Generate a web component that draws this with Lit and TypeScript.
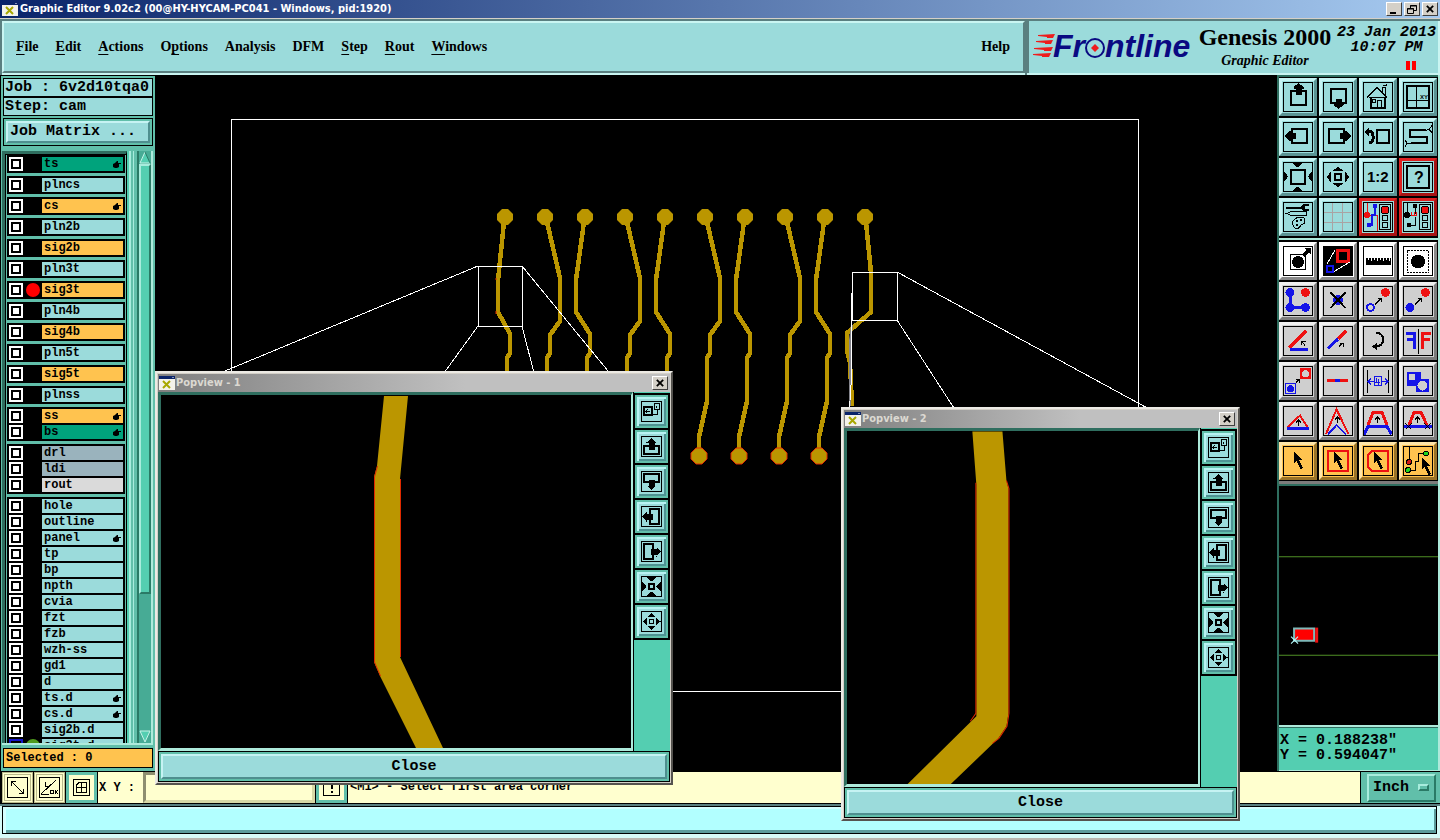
import { LitElement, html, css, svg, nothing } from "lit";
import { customElement, property } from "lit/decorators.js";
import { classMap } from "lit/directives/class-map.js";

const RED = "#ee1111";
const BLUE = "#1414e8";
const GREY = "#cfcfcf";
const COPPER = "#bb9600";

const fill = (d: string, color = "#000") => svg`<path d=${d} fill=${color} />`;
const line = (d: string, width = 1, color = "#000") =>
  svg`<path d=${d} fill="none" stroke=${color} stroke-width=${width} />`;
const dot = (x: number, y: number, r: number, color = "#000") =>
  svg`<circle cx=${x} cy=${y} r=${r} fill=${color} />`;
const ring = (x: number, y: number, r: number, width = 1, color = "#000") =>
  svg`<circle cx=${x} cy=${y} r=${r} fill="none" stroke=${color} stroke-width=${width} />`;

type Tool = { label: string; art: unknown; tone?: string };

const cursor = (x: number, y: number) =>
  fill(`M${x} ${y} l8.5 8 h-3.5 l4 8 -2.5 1 -4 -8 -2.5 2.5 z`);

const trafficLight = svg`
  ${line("M16.5 2.5 h11 v25 h-11 z")}
  ${dot(22, 8, 4, RED)}${ring(22, 8, 4)}${ring(22, 16, 3)}${ring(22, 23, 3)}`;

const viewTools: Tool[] = [
  { label: "Pan up", art: svg`${line("M8 9 h15 v14 h-15 z", 2)}${fill("M15.500 1 l5 4 v2 h-2 v6 h-6 v-6 h-2 v-2 z")}` },
  { label: "Pan down", art: svg`${line("M8 7 h15 v14 h-15 z", 2)}${fill("M12.500 17 h6 v4 h2 v2 l-5 4 -5 -4 v-2 h2 z")}` },
  {
    label: "Home view",
    art: svg`${line("M4 15.5 L14 5.5 L24 15.5")}${line("M19.5 10 v-5 h3 v8 M20 3.5 h3.5 v-2")}
      ${line("M8 15 v11 h14 v-11", 2)}${line("M14.5 26 v-8 h4 v8 M9.5 17.5 h3 v3 h-3 z M6 15.5 h17")}`,
  },
  {
    label: "Split view by coordinates",
    art: svg`${line("M4 4 h22 v22 h-22 z", 2)}${line("M13.5 4 v22 M4 18.5 h22")}
      <text x="17" y="17" font-size="6" font-family="Liberation Sans" font-weight="bold">XY</text>`,
  },
  { label: "Pan left", art: svg`${line("M9 7 h15 v14 h-15 z", 2)}${fill("M2 14 l4 -5 h2 v2 h5 v6 h-5 v2 h-2 z")}` },
  { label: "Pan right", art: svg`${line("M6 7 h15 v14 h-15 z", 2)}${fill("M28 14 l-4 -5 h-2 v2 h-5 v6 h5 v2 h2 z")}` },
  {
    label: "Previous view",
    art: svg`${line("M14 8 h12 v13 h-12 z", 2)}${line("M6 9.5 h2 q2 1 2 4 v3 q0 4 -4 4", 3)}${fill("M1 10 l5 -5 v9 z")}`,
  },
  {
    label: "Serpentine view",
    art: svg`${line("M23 8 H7 v7 h17 v6 H8", 2)}${line("M22 8.5 l4 -1 3 -4 M26 7.5 l3 3 M8 21 l-4 0 -2 -3 M4 21 l-2 4")}`,
  },
  {
    label: "Zoom in",
    art: svg`${line("M8 8 h14 v14 h-14 z", 2)}
      ${fill("M9 1 h11 l-5.500 4.500 z M9 29 h11 l-5.500 -4.500 z M1 9 v11 l4 -5.500 z M29 9 v11 l-4 -5.500 z")}`,
  },
  {
    label: "Zoom out",
    art: svg`${line("M12 12 h6 v6 h-6 z", 2)}
      ${fill("M9.500 9 h11 l-5.500 -4.500 z M9.500 21 h11 l-5.500 4.500 z M8 9.500 v11 l-4.500 -5.500 z M22 9.500 v11 l4.500 -5.500 z")}`,
  },
  { label: "Zoom one to two", art: svg`<text x="4" y="20" font-size="15" font-family="Liberation Sans" font-weight="bold">1:2</text>` },
  {
    label: "Query",
    tone: "alert",
    art: svg`${line("M4 4 h22 v22 h-22 z", 2)}<text x="11" y="21" font-size="16" font-family="Liberation Sans" font-weight="bold">?</text>`,
  },
  {
    label: "Display settings",
    art: svg`${line("M3 6 h16", 2)}${fill("M17 5 l3 -3 h6 v2 h-4 v3 h4 v2 h-6 z")}
      ${line("M3.500 11.500 l5 -2 h15 v4 h-15 z")}${line("M10 19 q3 -4 8 -4 q4 0 4 4 q0 3 -4 4 q-1 3 -4 3.500 q-5 0 -4 -7.500 z")}
      ${line("M13 19 h2 M17 18 h2 M13 23 h2", 2)}`,
  },
  { label: "Grid", art: line("M9.500 1 v28 M19.500 1 v28 M1 10.500 h28 M1 20.500 h28", 1, "#a9a3a3") },
  {
    label: "Netlist check",
    tone: "alert",
    art: svg`${line("M4.500 1 v12 h9.500 v16", 1, RED)}${dot(4, 13, 3, RED)}${line("M12 4 v9 h-3 v10 h-3", 2, BLUE)}${dot(12, 4, 2.5, BLUE)}${dot(6, 23, 2.5, BLUE)}${trafficLight}`,
  },
  {
    label: "Rule check",
    tone: "alert",
    art: svg`${line("M4.500 1 v12 M12.500 4 v8 M4 13.500 h5 M12.500 15 v8 h-6")}${dot(4, 13, 3)}${dot(12, 4, 2.5)}${dot(6, 23, 2.5)}${line("M8 13.500 h6 M8.500 10 v3 M11 10 v3 M13.500 10 v3", 1, RED)}${trafficLight}`,
  },
];

const arrowNE = line("M12 18.500 L18 12.500 M14.500 12.500 h3.500 v3.500");
const stepUp = (x: number, y: number) => line(`M${x} ${y + 5} v-6 M${x - 2.5} ${y + 1.5} l2.500 -2.500 l2.500 2.500`);

const editTools: Tool[] = [
  { label: "Move feature", tone: "white", art: svg`${line("M7.500 8.500 h15 v15 h-15 z")}${dot(15, 16, 6)}${line("M20 10 L26 4", 3)}${fill("M21 2 h7 v7 z")}` },
  {
    label: "Area zoom",
    tone: "white",
    art: svg`${fill("M0 0 h30 v30 h-30 z")}${line("M14.500 4.500 h11 v11 h-11 z", 3, RED)}${line("M4 20 h6 v6 h-6 z", 2, BLUE)}${line("M4 18 L12 4 M11 25.500 L27 16", 1, "#fff")}`,
  },
  { label: "Measure", tone: "white", art: svg`${fill("M3 12 h25 v7 h-25 z")}${line("M5.500 11 v3 M8.500 11 v4 M11.500 11 v3 M14.500 11 v4 M17.500 11 v3 M20.500 11 v4 M23.500 11 v3 M26.500 11 v4", 1, "#fff")}` },
  {
    label: "Select feature",
    tone: "white",
    art: svg`<rect x="4.500" y="4.500" width="21" height="22" fill="none" stroke="#000" stroke-dasharray="2 1" />${dot(15, 15.5, 7)}`,
  },
  { label: "Chain nodes", tone: "grey", art: svg`${line("M7.500 6 v15.500 h15", 3, BLUE)}${dot(7, 6.5, 4.5, BLUE)}${dot(7, 21.5, 4.5, BLUE)}${dot(22.5, 21.5, 4.5, BLUE)}${dot(22.5, 6.5, 4.5, RED)}` },
  { label: "Delete", tone: "grey", art: svg`${dot(15, 14, 5, BLUE)}${line("M7.500 6.500 L22.500 22 M22.500 6.500 L7.500 22", 2)}` },
  { label: "Move by copy", tone: "grey", art: svg`${ring(7.5, 21.5, 3.5, 2, BLUE)}${dot(22.5, 6.5, 4.5, RED)}${arrowNE}` },
  { label: "Move", tone: "grey", art: svg`${dot(7, 21.5, 4.5, BLUE)}${dot(22.5, 6.5, 4.5, RED)}${arrowNE}` },
  { label: "Rotate", tone: "grey", art: svg`${line("M6 22 L23 5", 3, RED)}${line("M7 23.500 h18", 3, BLUE)}${line("M22 19.500 L19 15.500 M18.500 19 v-3.500 h4")}` },
  { label: "Extend", tone: "grey", art: svg`${line("M15 13 L23 5", 3, RED)}${line("M5 22.500 L15 13", 3, BLUE)}${line("M16 20.500 L20 17 M16.500 17 h3.500 v3.500")}` },
  { label: "Arc", tone: "grey", art: svg`${line("M13 6.500 q7 1 7 7 q0 7 -8 7", 2)}${fill("M9 20.500 l5 -4 v8 z")}` },
  { label: "Mirror", tone: "grey", art: svg`${line("M15.500 3 v25")}${line("M3 7.500 h8.500 v15 M4 13.500 h7", 3, BLUE)}${line("M28 7.500 h-8.500 v15 M27 13.500 h-7", 3, RED)}` },
  {
    label: "Copy to layer",
    tone: "grey",
    art: svg`${fill("M17 2 h11 v11 h-11 z", RED)}${dot(22.5, 7.5, 3.5, GREY)}${line("M2.500 17.500 h10 v10 h-10 z", 1, BLUE)}${dot(7.5, 22.5, 3.5, BLUE)}${line("M13 16.500 l3 -3 M13 13.500 h3 v3")}`,
  },
  { label: "Break line", tone: "grey", art: svg`${line("M4 14.500 h21", 3, RED)}${line("M12 14.500 h5", 3, BLUE)}` },
  {
    label: "Set spacing",
    tone: "grey",
    art: svg`${line("M4.500 4 v23 M25.500 4 v23")}${line("M11.500 10.500 h7 v9 h-7 z M5 15.500 h6 M19 15.500 h6 M8 12.500 l-3 3 3 3 M22 12.500 l3 3 -3 3 M14 12 l-1 4 h4 M15.500 13 v6", 1, BLUE)}`,
  },
  { label: "Combine shapes", tone: "grey", art: svg`${fill("M4 6 h14 v7 h8 v13 h-13 v-6 h-9 z", BLUE)}${dot(9, 11, 3.5, GREY)}${dot(19.5, 19.5, 5, GREY)}` },
  { label: "Offset corner", tone: "grey", art: svg`${line("M4 22 L17 9.500 L25 22", 2, RED)}${line("M4 22.500 h22", 3, BLUE)}${stepUp(15.5, 15)}` },
  { label: "Slide corner", tone: "grey", art: svg`${line("M3 28 L13.500 3.500 L25.500 28", 2, RED)}${line("M5 28.500 L13.500 19 L23 28.500", 2, BLUE)}${stepUp(14.5, 12)}` },
  { label: "Slide segment", tone: "grey", art: svg`${line("M5 19 L10 6.500 H19 L24 19", 3, RED)}${line("M1 28.500 L5 20.500 H24 L28.500 28.500", 3, BLUE)}${stepUp(14.5, 12)}` },
  {
    label: "Stretch segment",
    tone: "grey",
    art: svg`${line("M6 19 L11 6.500 H18 L24 19", 3, RED)}${line("M1 20.500 h28", 3, BLUE)}${line("M2.500 17.500 l6 6 m0 -6 l-6 6 M21.500 17.500 l6 6 m0 -6 l-6 6")}${stepUp(14.5, 12)}`,
  },
  { label: "Pick single", tone: "amber", art: cursor(11, 6) },
  { label: "Pick in rectangle", tone: "amber", art: svg`${line("M5 5 h20 v20 h-20 z", 2, RED)}${cursor(11, 6)}` },
  { label: "Pick in polygon", tone: "amber", art: svg`${line("M9 5 h16 v20 h-16 l-4 -4 v-12 z", 2, RED)}${cursor(11, 6)}` },
  {
    label: "Pick net",
    tone: "amber",
    art: svg`${line("M6.500 1 v14 M5 24.500 h7 v-9 h3 v-8 h8")}${dot(6, 16, 2.5, "#d01818")}${ring(6, 16, 2.5)}${dot(5, 24, 2.5, "#1fd41f")}${ring(5, 24, 2.5)}${dot(23, 7.5, 2.5, "#1fd41f")}${ring(23, 7.5, 2.5)}${cursor(19, 12)}`,
  },
];

const popTools: Tool[] = [
  { label: "Pick area", art: svg`${line("M3 6 h8 v8 h-8 z", 2)}${line("M13.500 2.500 h5 v6 h-5 z M12 13.500 h4.500 v-5 M15.500 4.500 v2 M8.500 10.500 h-4 M6.500 8.500 l-2 2 2 2")}` },
  { label: "Pan up", art: svg`${line("M8 10 h-5 v8 h15 v-8 h-5", 2)}${fill("M10.500 2 l5 4.500 h-2 v7 h-6 v-7 h-2 z")}` },
  { label: "Pan down", art: svg`${line("M8 11 h-5 v-8 h15 v8 h-5", 2)}${fill("M10.500 19 l5 -4.500 h-2 v-6 h-6 v6 h-2 z")}` },
  { label: "Pan left", art: svg`${line("M9 8 v-5 h9 v15 h-9 v-5", 2)}${fill("M1 10.500 l4.500 -5 v2 h6 v6 h-6 v2 z")}` },
  { label: "Pan right", art: svg`${line("M12 8 v-5 h-9 v15 h9 v-5", 2)}${fill("M20 10.500 l-4.500 -5 v2 h-6 v6 h6 v2 z")}` },
  { label: "Zoom in", art: svg`${line("M8 8 h5 v5 h-5 z", 2)}${fill("M5 1 h11 l-5.500 4.500 z M5 20 h11 l-5.500 -4.500 z M1 5 v11 l4.500 -5.500 z M20 5 v11 l-4.500 -5.500 z")}` },
  { label: "Zoom out", art: svg`${line("M8.500 8.500 h4 v4 h-4 z")}${fill("M6.500 6 h8 l-4 -4.500 z M6.500 15 h8 l-4 4.500 z M6 6.500 v8 l-4.500 -4 z M15 6.500 v8 l4.500 -4 z")}` },
];

const appIcon = html`<svg class="app-icon" viewBox="0 0 16 14" width="16" height="14" aria-hidden="true">
  <rect width="16" height="14" fill="#f4f2ea" />
  <path d="M0 0 h16 v3 h-16 z" fill="#0a246a" />
  <path d="M13.500 1 h1 v1 h-1 z" fill="#fff" />
  <path d="M4 5 l7 7 M11 5 l-7 7" stroke="#a8a800" stroke-width="2" />
</svg>`;

const glyphs = {
  minimize: line("M2 9 h6", 2),
  restore: svg`${line("M4.500 4 v-2.500 h6 v5 h-3 M1.500 4.500 h6 v5 h-6 z")}${line("M1 5 h7 M4 2 h7", 1)}`,
  close: line("M2 2 l7 7 M9 2 l-7 7", 2),
};

const captionCss = css`
  .caption-button {
    display: grid;
    place-items: center;
    width: 16px;
    height: 14px;
    padding: 0;
    background: #d4d0c8;
    border: 1px solid;
    border-color: #fff #404040 #404040 #fff;
  }
  .app-icon {
    display: block;
    flex: none;
  }
`;

@customElement("tool-grid")
class ToolGrid extends LitElement {
  @property({ attribute: false }) tools: Tool[] = [];
  @property({ type: Boolean, reflect: true }) compact = false;

  static styles = css`
    :host {
      display: grid;
      grid-template-columns: repeat(4, 38px);
      gap: 2px;
      background: #000;
    }
    :host([compact]) {
      grid-template-columns: 33px;
    }
    button {
      display: grid;
      place-items: center;
      height: 38px;
      padding: 0;
      background: #9bdbdb;
      border: 3px solid;
      border-color: #c6f3f3 #5b9393 #5b9393 #c6f3f3;
    }
    svg {
      display: block;
      outline: 1px solid #000;
      outline-offset: -1px;
      shape-rendering: crispEdges;
    }
    .alert {
      border-color: #dd2222 #a81414 #a81414 #dd2222;
    }
    .white {
      background: #fff;
      border-color: #fff #8a8a8a #8a8a8a #fff;
    }
    .grey {
      background: #cfcfcf;
      border-color: #efefef #7c7c7c #7c7c7c #efefef;
    }
    .amber {
      background: #ffc34f;
      border-color: #ffe6a8 #9a7428 #9a7428 #ffe6a8;
    }
    .mini {
      height: 33px;
      border: 2px solid #61bfaa;
      box-shadow: inset 2px 2px 0 #b9f3f3, inset -2px -2px 0 #4f9494;
    }
  `;

  render() {
    const side = this.compact ? 21 : 30;
    return this.tools.map(
      (tool) => html`<button
        type="button"
        class=${this.compact ? "mini" : tool.tone ?? "teal"}
        title=${tool.label}
        aria-label=${tool.label}
      >
        <svg viewBox="0 0 ${side} ${side}" width=${side} height=${side}>${tool.art}</svg>
      </button>`,
    );
  }
}

@customElement("pop-view")
class PopView extends LitElement {
  @property() heading = "";
  @property() view = "0 0 470 355";
  @property({ attribute: false }) art: unknown = nothing;

  static styles = [
    captionCss,
    css`
      :host {
        box-sizing: border-box;
        display: flex;
        flex-direction: column;
        height: 414px;
        padding: 1px;
        background: #d4d0c8;
        border: 2px solid;
        border-color: #eceae4 #55534f #55534f #eceae4;
      }
      .title {
        display: flex;
        align-items: center;
        gap: 1px;
        height: 18px;
        padding: 0 2px 0 1px;
        background: linear-gradient(to right, #808080, #c0c0c0 60%);
        color: #dcd9d2;
        font: bold 11px/18px "DejaVu Sans Condensed", "DejaVu Sans", sans-serif;
      }
      .name {
        flex: 1;
      }
      .body {
        flex: 1;
        display: flex;
        min-height: 0;
        background: #000;
      }
      .screen {
        flex: 1;
        min-width: 0;
        border: 3px solid;
        border-width: 3px 2px 3px 3px;
        border-color: #2f6e5f #aeeadb #aeeadb #2f6e5f;
        background: #000;
      }
      .screen svg {
        display: block;
        width: 100%;
        height: 100%;
      }
      .side {
        width: 33px;
        padding: 3px 2px 0 1px;
        background: #54ceb1;
        border-left: 1px solid #000;
      }
      .side tool-grid {
        outline: 2px solid #000;
      }
      .footer {
        display: flex;
        padding: 2px;
        background: #61bfaa;
        border: 1px solid #000;
      }
      .dismiss {
        flex: 1;
        height: 25px;
        padding: 0;
        background: #9bdbdb;
        border: 2px solid;
        border-color: #c6f3f3 #4f8f8f #4f8f8f #c6f3f3;
        color: #000;
        font: bold 15px/20px "Liberation Mono", monospace;
      }
    `,
  ];

  render() {
    return html`
      <div class="title">
        ${appIcon}
        <span class="name">${this.heading}</span>
        <button class="caption-button" type="button" aria-label="Close window">
          <svg viewBox="0 0 11 11" width="10" height="10">${glyphs.close}</svg>
        </button>
      </div>
      <div class="body">
        <div class="screen"><svg viewBox=${this.view} preserveAspectRatio="xMidYMid slice">${this.art}</svg></div>
        <div class="side"><tool-grid compact .tools=${popTools}></tool-grid></div>
      </div>
      <div class="footer"><button class="dismiss" type="button">Close</button></div>
    `;
  }
}

type Layer = { name: string; tone?: string; pointed?: boolean; mark?: string };
const layer = (name: string, tone = "", pointed = false, mark = ""): Layer => ({ name, tone, pointed, mark });

const layerGroups: Layer[][] = [
  [layer("ts", "mask", true)],
  [layer("plncs")],
  [layer("cs", "signal", true)],
  [layer("pln2b")],
  [layer("sig2b", "signal")],
  [layer("pln3t")],
  [layer("sig3t", "signal", false, "red")],
  [layer("pln4b")],
  [layer("sig4b", "signal")],
  [layer("pln5t")],
  [layer("sig5t", "signal")],
  [layer("plnss")],
  [layer("ss", "signal", true), layer("bs", "mask", true)],
  [layer("drl", "drill"), layer("ldi", "drill"), layer("rout", "rout")],
  [
    ..."hole outline".split(" ").map((n) => layer(n)),
    layer("panel", "", true),
    ..."tp bp npth cvia fzt fzb wzh-ss gd1 d".split(" ").map((n) => layer(n)),
    layer("ts.d", "", true),
    layer("cs.d", "", true),
    layer("sig2b.d"),
    layer("sig3t.d", "", false, "green"),
  ],
];

const menus = [
  ["", "F", "ile"],
  ["", "E", "dit"],
  ["", "A", "ctions"],
  ["O", "p", "tions"],
  ["Analysis", "", ""],
  ["DFM", "", ""],
  ["", "S", "tep"],
  ["", "R", "out"],
  ["", "W", "indows"],
];

const pad = (x: number, y: number) =>
  `M${x - 3} ${y - 8} h6 l5 5 v6 l-5 5 h-6 l-5 -5 v-6 z`;

const trace = (index: number) => {
  const x = 505 + index * 40;
  if (index === 9) return "M866 222 L871 273 V312 L847 333 V350 L850 363 L852 406";
  const bulge = index === 0 ? -7 : -9;
  const upper = index % 2 === 0
    ? `M${x - 1} 222 L${x + bulge} 280 V312 L${x + 5} 334`
    : `M${x + 2} 222 L${x + 15} 278 V321 L${x + 5} 335`;
  const lower = index > 4 ? ` V401 L${x - 6} 437 V456` : " V380";
  return `${upper} V353 L${x + 2} 358${lower}`;
};

const boardArt = svg`
  <g fill="none" stroke=${COPPER} stroke-width="4.500" shape-rendering="crispEdges">
    ${Array.from({ length: 10 }, (_, i) => svg`<path d=${trace(i)} />`)}
  </g>
  <g fill=${COPPER}>
    ${Array.from({ length: 10 }, (_, i) => svg`<path d=${pad(505 + i * 40, 217)} />`)}
    ${Array.from({ length: 4 }, (_, i) => svg`<path d=${pad(699 + i * 40, 456)} stroke="#e02a00" stroke-width="1" />`)}
  </g>
  <path d="M496 278 v2 M496 311 v3" stroke="#e02a00" />
  <path d="M852 325 L850 340 V406" fill="none" stroke="#85858c" stroke-width="2" />
  <g fill="none" stroke="#fff" stroke-width="1" shape-rendering="crispEdges">
    <path d="M231.500 119.500 H1138.500 V691.500 H231.500 z" />
    <path d="M478.500 266.500 h44 v60 h-44 z M852.500 272.500 h45 v48 h-45 z" />
    <path d="M478 266 L155 400 M522 266 L640 410 M478 326 L410 420 M522 326 L546 420" />
    <path d="M897 272 L1162 416 M897 320 L972 436 M851.500 293 V378 L849 416" />
  </g>`;

const popOneArt = svg`
  <path fill=${COPPER} d="M384 397 H408 L400 480 V658 L443 749 H416 L380 677 L374 663 V478 L377 467 z" />
  <path fill="none" stroke="#e02a00" d="M377.500 467 L374.500 478 V663 L380.500 677 M400.500 480 V658" />`;

const popTwoArt = svg`
  <path fill=${COPPER} d="M972 433 H1002 L1006 482 L1008 490 V714 L1006 727 L998 739 L950 785 H907 L976 717 V486 z" />
  <path fill="none" stroke="#e02a00" d="M1006 482 L1008.500 490 V714 L1006.500 727 L998.500 739 L992 744 M975.500 484 V714 L970 722" />`;

const overviewArt = svg`
  <path d="M1278.500 556.500 H1438 M1278.500 654.500 H1438 M1278.500 556 V655" stroke="#4f8f26" fill="none" />
  <path d="M1294 628 h20 v12 h-20 z" fill="#ff0000" stroke="#7fb9b9" stroke-width="2" />
  <path d="M1316.500 627 v15" stroke="#ee1111" stroke-width="3" />
  <path d="M1291 636 l7 7 M1298 636 l-7 7" stroke="#b8ffff" />`;

@customElement("app-root")
class AppRoot extends LitElement {
  static styles = [
    captionCss,
    css`
      :host {
        box-sizing: border-box;
        display: flex;
        flex-direction: column;
        position: relative;
        height: 100vh;
        overflow: hidden;
        background: #5a7f80;
        color: #000;
        font: bold 15px/18px "Liberation Mono", monospace;
      }
      .titlebar {
        display: flex;
        align-items: center;
        gap: 2px;
        height: 18px;
        padding: 0 2px;
        border-bottom: 1px solid #d4d0c8;
        background: linear-gradient(to right, #0a246a, #a6caf0);
        color: #fff;
        font: bold 11px/18px "DejaVu Sans Condensed", "DejaVu Sans", sans-serif;
      }
      .app-name {
        flex: 1;
      }

      .header {
        display: flex;
        gap: 2px;
        height: 54px;
        padding-top: 2px;
      }
      .menu,
      .brand {
        box-sizing: border-box;
        display: flex;
        align-items: center;
        background: #9bdbdb;
        border: 2px solid;
        border-color: #c9f5f2 #5a7f80 #5a7f80 #c9f5f2;
        box-shadow: 0 2px 0 #c9f5f2;
        height: 52px;
      }
      .menu {
        flex: 1;
        margin-left: 2px;
        padding: 0 13px 0 12px;
        gap: 17px;
        font: bold 14px/20px "Liberation Serif", serif;
      }
      .menu button {
        padding: 0;
        border: 0;
        background: none;
        color: inherit;
        font: inherit;
      }
      .menu u {
        text-underline-offset: 3px;
      }
      .help {
        margin-left: auto;
      }
      .brand {
        width: 413px;
        padding: 0 2px 0 4px;
        border-color: #5a7f80 #c9f5f2 #c9f5f2 #5a7f80;
        border-width: 0 2px 0 2px;
      }
      .logo {
        display: block;
        flex: none;
      }
      .product {
        flex: 1;
        text-align: center;
        white-space: nowrap;
      }
      .product-name {
        font: bold 24px/28px "Liberation Serif", serif;
      }
      .product-part {
        font: italic bold 14px/20px "Liberation Serif", serif;
      }
      .clock {
        text-align: center;
        font: italic bold 15px/15px "Liberation Mono", monospace;
        white-space: nowrap;
      }
      .paused {
        display: flex;
        gap: 2px;
        justify-content: flex-end;
        padding: 6px 20px 0 0;
      }
      .paused i {
        width: 4px;
        height: 9px;
        background: #f00;
      }

      .main {
        flex: 1;
        min-height: 0;
        display: flex;
        background: #000;
      }
      .layers {
        box-sizing: border-box;
        width: 155px;
        display: flex;
        flex-direction: column;
        padding: 2px 2px 3px 3px;
        background: #61bfaa;
        border-top: 1px solid #000;
        border-left: 1px solid #000;
      }
      .fact {
        height: 17px;
        padding: 0 0 0 1px;
        margin: 0 0 0 -1px;
        border: 1px solid #000;
        background: #9bdbdb;
        line-height: 17px;
        white-space: nowrap;
      }
      .matrix {
        display: flex;
        margin: 2px 0 5px -1px;
        padding: 2px;
        border: 1px solid #000;
      }
      .matrix button {
        flex: 1;
        height: 22px;
        padding: 0 2px;
        border: 2px solid;
        border-color: #c6f3f3 #4f8f8f #4f8f8f #c6f3f3;
        background: #9bdbdb;
        color: #000;
        text-align: left;
        font: inherit;
      }
      .layer-pane {
        flex: 1;
        min-height: 0;
        display: flex;
        margin-left: -2px;
        border-bottom: 2px solid #aeeadb;
      }
      .layer-list {
        flex: 1;
        overflow: hidden;
        display: flex;
        flex-direction: column;
        gap: 3px;
        padding: 1px 1px 0 2px;
        border-top: 3px solid #2f6e5f;
        border-left: 3px solid #2f6e5f;
        border-right: 1px solid #000;
        box-shadow: inset 1px 1px 0 #000;
        font-size: 12px;
      }
      .group {
        flex: none;
        display: grid;
        gap: 2px;
        padding: 2px;
        background: #000;
      }
      .layer {
        display: grid;
        grid-template-columns: 14px 1fr 81px;
        align-items: center;
        height: 14px;
      }
      .layer input {
        appearance: none;
        width: 14px;
        height: 14px;
        margin: 0;
        background: #fff;
        border: 2px solid #fff;
        box-shadow: inset 0 0 0 2px #000;
      }
      .layer input.shown {
        background: #1414c8;
        border-color: #1414c8;
      }
      .mark {
        justify-self: center;
        width: 14px;
        height: 14px;
        border-radius: 50%;
      }
      .mark.red {
        background: #f00;
      }
      .mark.green {
        background: #4f9a1c;
      }
      .layer-name {
        display: flex;
        justify-content: space-between;
        align-items: center;
        height: 14px;
        padding: 0 2px;
        background: #9bdbdb;
        line-height: 14px;
      }
      .layer-name.mask {
        background: #00a37c;
      }
      .layer-name.signal {
        background: #ffc34f;
      }
      .layer-name.drill {
        background: #9ab3bd;
      }
      .layer-name.rout {
        background: #dadada;
      }
      .gutter {
        width: 10px;
        background: linear-gradient(to right, #54ceb1 2px, #a8ecdd 2px 4px, #61bfaa 4px 6px, #a8ecdd 6px 7px, #61bfaa 7px);
      }
      .scroll {
        display: flex;
        flex-direction: column;
        width: 12px;
        border-left: 2px solid #2a7a66;
        border-right: 2px solid #aeeadb;
        background: #47ab95;
      }
      .scroll svg {
        display: block;
        flex: none;
      }
      .track {
        flex: 1;
      }
      .thumb {
        box-sizing: border-box;
        height: 76%;
        background: #54ceb1;
        border: 2px solid;
        border-color: #a8ecdd #2a7a66 #2a7a66 #a8ecdd;
      }
      .selected {
        height: 18px;
        margin: 3px 0 0 -1px;
        padding-left: 2px;
        border: 1px solid #000;
        background: #ffc34f;
        font-size: 12px;
      }

      .canvas {
        flex: 1;
        min-width: 0;
        background: #000;
      }
      .canvas svg,
      .overview svg {
        display: block;
        width: 100%;
        height: 100%;
      }

      .tools {
        box-sizing: border-box;
        width: 163px;
        display: flex;
        flex-direction: column;
        border-left: 2px solid #2f6e5f;
        border-right: 2px solid #aeeadb;
      }
      .views {
        padding: 1px 0 2px;
        border-top: 2px solid #2f6e5f;
        border-bottom: 2px solid #aeeadb;
      }
      .edits {
        padding: 2px 0 1px;
        border-bottom: 3px solid #7c7c7c;
      }
      .overview {
        flex: 1;
        min-height: 0;
        border-top: 2px solid #2f6e5f;
        border-bottom: 2px solid #aeeadb;
      }
      .readout {
        margin: 0;
        height: 37px;
        padding: 5px 0 0 1px;
        border-top: 1px solid #2f6e5f;
        border-bottom: 1px solid #aeeadb;
        background: #54ceb1;
        font-size: 15px;
        line-height: 15px;
      }

      .command {
        box-sizing: border-box;
        display: flex;
        height: 33px;
        padding-left: 2px;
        background: #000;
        border-top: 1px solid #000;
        border-bottom: 1px solid #000;
        font-size: 12px;
        gap: 1px;
      }
      .mode {
        display: grid;
        place-items: center;
        width: 31px;
        padding: 0;
        background: #ffffcf;
        border: 3px double #b9b98a;
      }
      .mode.active {
        background: #ffffcf;
        border: 3px solid #61bfaa;
      }
      .mode svg {
        display: block;
        shape-rendering: crispEdges;
      }
      .entry {
        display: flex;
        align-items: center;
        gap: 8px;
        padding-left: 1px;
        background: #ffffcf;
      }
      .entry input {
        box-sizing: border-box;
        width: 172px;
        height: 31px;
        background: #ffffcf;
        border: 3px solid;
        border-color: #8f8f70 #d9d9a6 #d9d9a6 #8f8f70;
        border-radius: 0;
        font: inherit;
      }
      .prompt {
        flex: 1;
        padding-left: 2px;
        background: #ffffcf;
        line-height: 31px;
      }
      .units {
        display: flex;
        align-items: center;
        padding: 0 4px 0 6px;
        background: #61bfaa;
      }
      .unit-box {
        display: flex;
        align-items: center;
        height: 24px;
        padding: 0 5px 0 2px;
        border: 2px solid;
        border-color: #a8ecdd #2a7a66 #2a7a66 #a8ecdd;
      }
      .unit-box select {
        appearance: none;
        width: 47px;
        padding: 0 0 0 2px;
        border: 0;
        background: none;
        color: #000;
        font: bold 15px/20px "Liberation Mono", monospace;
      }
      .knob {
        width: 7px;
        height: 3px;
        border: 2px solid;
        border-color: #a8ecdd #2a7a66 #2a7a66 #a8ecdd;
      }
      .status {
        box-sizing: border-box;
        height: 36px;
        padding: 2px 3px 3px 2px;
        border-bottom: 2px solid #b9b6af;
        background: linear-gradient(#5a7f80 2px, #d7fbf8 2px);
      }
      .status-field {
        box-sizing: border-box;
        height: 28px;
        background: #b2ffff;
        border: 1px solid #000;
        box-shadow: inset 3px 2px 0 #d4ffff, inset -2px -3px 0 #5c9c9c;
      }

      .pop-one,
      .pop-two {
        position: absolute;
      }
      .pop-one {
        left: 155px;
        top: 371px;
        width: 518px;
      }
      .pop-two {
        left: 841px;
        top: 407px;
        width: 399px;
      }
    `,
  ];

  private renderLayer(item: Layer) {
    const tone = item.tone ?? "";
    return html`<label class="layer">
      <input type="checkbox" class=${classMap({ shown: item.mark === "green" })} />
      <span class="mark ${item.mark ?? ""}"></span>
      <span class=${classMap({ "layer-name": true, mask: tone === "mask", signal: tone === "signal", drill: tone === "drill", rout: tone === "rout" })}>
        ${item.name}
        ${item.pointed
          ? html`<svg viewBox="0 0 8 8" width="8" height="8" aria-hidden="true">
              ${fill("M0 4 l2 -1 2 -2 h1 v2 h3 v1 h-2 v3 l-2 1 h-2 l-2 -1 z")}
            </svg>`
          : nothing}
      </span>
    </label>`;
  }

  render() {
    return html`
      <header class="titlebar">
        ${appIcon}
        <span class="app-name">Graphic Editor 9.02c2 (00@HY-HYCAM-PC041 - Windows, pid:1920)</span>
        <button class="caption-button" type="button" aria-label="Minimize"><svg viewBox="0 0 12 11" width="12" height="11">${glyphs.minimize}</svg></button>
        <button class="caption-button" type="button" aria-label="Restore"><svg viewBox="0 0 12 11" width="12" height="11">${glyphs.restore}</svg></button>
        <button class="caption-button" type="button" aria-label="Close"><svg viewBox="0 0 11 11" width="10" height="10">${glyphs.close}</svg></button>
      </header>

      <div class="header">
        <nav class="menu">
          ${menus.map(([before, key, after]) => html`<button type="button">${before}${key ? html`<u>${key}</u>` : nothing}${after}</button>`)}
          <button class="help" type="button">Help</button>
        </nav>
        <div class="brand">
          <svg class="logo" viewBox="0 0 160 36" width="160" height="36" role="img" aria-label="Frontline">
            <path d="M22 5 L20 9 H14 V8 L5 7 V6 z M20 11 L18 15 H12 V14 L3 13 V12 z M20 18 L18 22 H11 V21 L1 20 V19 z M18 24 L16 28 H9 V27 L0 26 V25 z" fill="#ee1c1c" />
            <g font-family="Liberation Sans" font-weight="bold" font-style="italic" font-size="32" fill="#0a0a82">
              <text x="20" y="28">Fr</text>
              <text x="72" y="28">ntline</text>
            </g>
            <circle cx="62" cy="19" r="9" fill="none" stroke="#0a0a82" stroke-width="2" />
            <path d="M62 15 l4 4 -4 4 -4 -4 z" fill="#ee1c1c" />
          </svg>
          <div class="product">
            <div class="product-name">Genesis 2000</div>
            <div class="product-part">Graphic Editor</div>
          </div>
          <div class="clock">
            <div>23 Jan 2013</div>
            <div>10:07 PM</div>
            <div class="paused"><i></i><i></i></div>
          </div>
        </div>
      </div>

      <div class="main">
        <aside class="layers">
          <div class="fact">Job : 6v2d10tqa0</div>
          <div class="fact">Step: cam</div>
          <div class="matrix"><button type="button">Job Matrix ...</button></div>
          <div class="layer-pane">
            <div class="layer-list">
              ${layerGroups.map((group) => html`<div class="group">${group.map((item) => this.renderLayer(item))}</div>`)}
            </div>
            <div class="gutter"></div>
            <div class="scroll">
              <svg viewBox="0 0 12 13" width="12" height="13">${fill("M6 1 l5 11 h-10 z", "#54ceb1")}${line("M6 1 L1 12 H11", 1, "#c6f3e8")}${line("M6 1 L11 12", 1, "#2a7a66")}</svg>
              <div class="track"><div class="thumb"></div></div>
              <svg viewBox="0 0 12 13" width="12" height="13">${fill("M6 12 l5 -11 h-10 z", "#54ceb1")}${line("M6 12 L1 1 H11 z", 1, "#c6f3e8")}</svg>
            </div>
          </div>
          <div class="selected">Selected : 0</div>
        </aside>

        <main class="canvas">
          <svg viewBox="155 75 1122 696" preserveAspectRatio="xMinYMin slice">${boardArt}</svg>
        </main>

        <aside class="tools">
          <div class="views"><tool-grid .tools=${viewTools}></tool-grid></div>
          <div class="edits"><tool-grid .tools=${editTools}></tool-grid></div>
          <div class="overview">
            <svg viewBox="1279 486 159 238" preserveAspectRatio="xMinYMin slice">${overviewArt}</svg>
          </div>
          <div class="readout"><div>X = 0.188238"</div><div>Y = 0.594047"</div></div>
        </aside>
      </div>

      <div class="command">
        <button class="mode" type="button" aria-label="Diagonal mode">
          <svg viewBox="0 0 21 21" width="21" height="21">${line("M0.500 0.500 h20 v20 h-20 z M4 4 L17 17 M4 9 V4.500 h5 M12 16.500 h4.500 v-5")}</svg>
        </button>
        <button class="mode" type="button" aria-label="Absolute mode">
          <svg viewBox="0 0 21 21" width="21" height="21">${line("M0.500 0.500 h20 v20 h-20 z M2 17 L17 3 M2 17.500 h8 M6.500 5 v4 h3 M11.500 13.500 h3 v3 h-3 z M16.500 13 v4 M19 13 l-2 2 2 2")}</svg>
        </button>
        <button class="mode active" type="button" aria-label="Grid snap">
          <svg viewBox="0 0 21 21" width="21" height="21">${line("M2.500 2.500 h16 v16 h-16 z M5.500 8 l3 -3 h7 v10.500 h-10 z M10.500 5 v11 M5 10.500 h11")}</svg>
        </button>
        <label class="entry">X Y :<input type="text" aria-label="Coordinates" /></label>
        <button class="mode active" type="button" aria-label="Message">
          <svg viewBox="0 0 21 21" width="21" height="21">${line("M2.500 2.500 h16 v16 h-16 z")}${line("M10.500 5 v7 M10.500 14 v2", 2)}</svg>
        </button>
        <div class="prompt">&lt;M1&gt; - Select first area corner</div>
        <label class="units" aria-label="Units">
          <span class="unit-box"><select aria-label="Units"><option>Inch</option><option>MM</option></select><span class="knob"></span></span>
        </label>
      </div>
      <footer class="status"><div class="status-field"></div></footer>

      <pop-view class="pop-one" heading="Popview - 1" view="161 395 470 355" .art=${popOneArt}></pop-view>
      <pop-view class="pop-two" heading="Popview - 2" view="847 431 350 355" .art=${popTwoArt}></pop-view>
    `;
  }
}
